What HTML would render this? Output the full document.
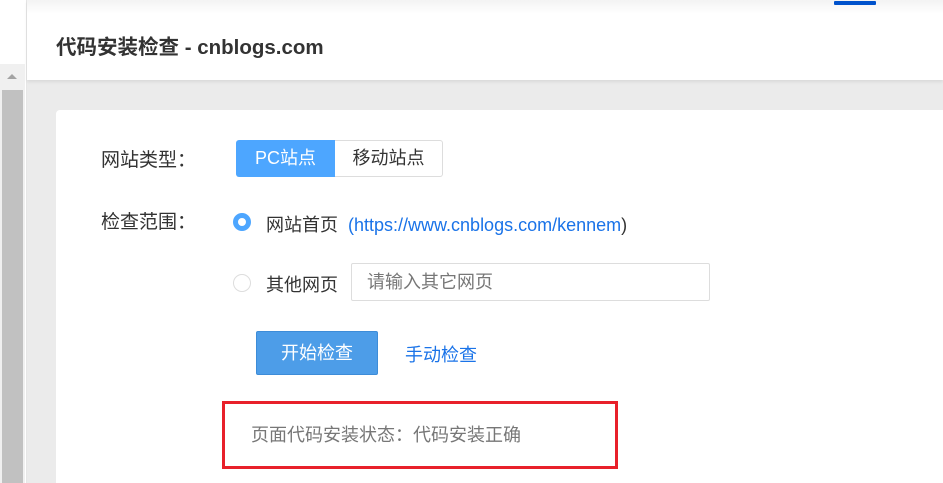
<!DOCTYPE html>
<html><head><meta charset="utf-8"><style>
body{margin:0;width:943px;height:483px;overflow:hidden;background:#ebebeb;font-family:"Liberation Sans","Noto Sans CJK SC",sans-serif;position:relative}
.a{position:absolute}
</style></head><body>
<div class="a" style="left:0;top:0;width:26px;height:483px;background:#fff;border-right:1px solid #e6e6e6"></div>
<div class="a" style="left:0;top:64px;width:25px;height:419px;background:#f0f0f0"></div>
<div class="a" style="left:7px;top:74px;width:0;height:0;border-left:5px solid transparent;border-right:5px solid transparent;border-bottom:5px solid #a3a3a3"></div>
<div class="a" style="left:2px;top:90px;width:21px;height:393px;background:#c1c1c1"></div>
<div class="a" style="left:27px;top:0;width:916px;height:80px;background:linear-gradient(#f3f3f3,#fff 14px);box-shadow:0 2px 3px rgba(0,0,0,.08)"></div>
<div class="a" style="left:834px;top:1px;width:42px;height:4px;background:#0052cc;border-radius:1px"></div>
<div class="a" style="left:56px;top:30px;font-size:20.5px;font-weight:bold;color:#333">代码安装检查 - cnblogs.com</div>
<div class="a" style="left:56px;top:110px;width:887px;height:373px;background:#fff;border-radius:4px 0 0 0"></div>
<div class="a" style="left:101px;top:145px;font-size:19px;color:#333">网站类型：</div>
<div class="a" style="left:236px;top:140px;width:99px;height:37px;background:#4da6ff;border-radius:3px 0 0 3px;color:#fff;font-size:18px;line-height:37px;text-align:center">PC站点</div>
<div class="a" style="left:335px;top:140px;width:107px;height:35px;border:1px solid #ddd;border-left:none;border-radius:0 3px 3px 0;color:#333;font-size:18px;line-height:35px;text-align:center">移动站点</div>
<div class="a" style="left:101px;top:207px;font-size:19px;color:#333">检查范围：</div>
<div class="a" style="left:233px;top:213px;width:8px;height:8px;border:5px solid #4da6ff;border-radius:50%;background:#fff"></div>
<div class="a" style="left:266px;top:211px;font-size:18px;color:#333">网站首页&nbsp; <span style="color:#1a73e8">(https://www.cnblogs.com/kennem</span>)</div>
<div class="a" style="left:233px;top:274px;width:16px;height:16px;border:1px solid #ddd;border-radius:50%"></div>
<div class="a" style="left:266px;top:271px;font-size:18px;color:#333">其他网页</div>
<div class="a" style="left:351px;top:263px;width:357px;height:36px;border:1px solid #ddd;border-radius:2px;font-size:18px;color:#777;line-height:36px;text-indent:15px">请输入其它网页</div>
<div class="a" style="left:256px;top:331px;width:120px;height:42px;background:#4d9de8;border:1px solid #3d8cd8;border-radius:2px;color:#fff;font-size:18px;line-height:42px;text-align:center">开始检查</div>
<div class="a" style="left:405px;top:341px;font-size:18px;color:#1a73e8">手动检查</div>
<div class="a" style="left:222px;top:401px;width:390px;height:62px;border:3px solid #e8202a"></div>
<div class="a" style="left:251px;top:421px;font-size:18px;color:#777">页面代码安装状态：代码安装正确</div>
</body></html>
